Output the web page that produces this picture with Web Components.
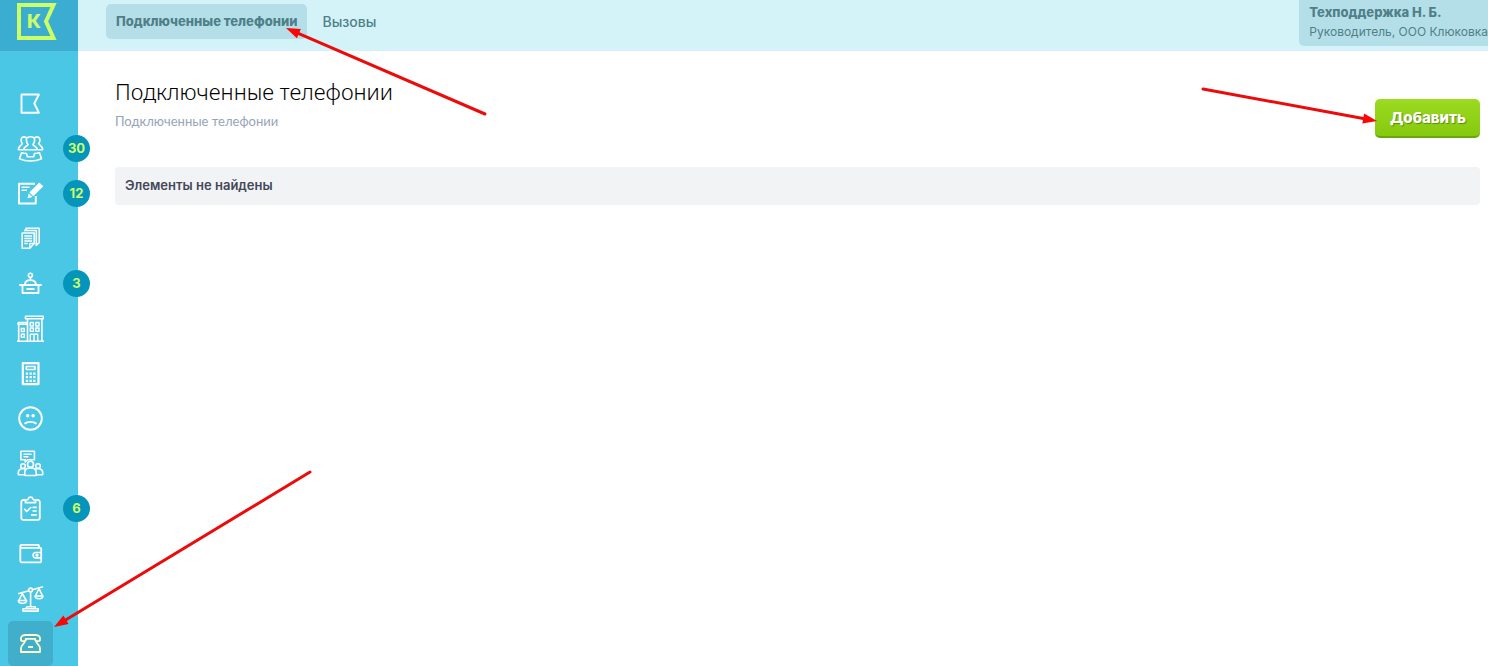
<!DOCTYPE html>
<html lang="ru">
<head>
<meta charset="utf-8">
<meta name="viewport" content="width=device-width, initial-scale=1">
<title>Подключенные телефонии</title>
<style>
  html, body { margin: 0; }
  body { background: #fff; font-family: Inter, "Noto Sans", sans-serif; color: #000; }
</style>
</head>
<body>
<crm-app>
  <side-bar slot="side">
    <side-item icon="flag" label="Главная"></side-item>
    <side-item icon="clients" label="Обращения" count="30"></side-item>
    <side-item icon="note" label="Заявки" count="12"></side-item>
    <side-item icon="docs" label="Документы"></side-item>
    <side-item icon="desk" label="Приёмная" count="3"></side-item>
    <side-item icon="building" label="Дома"></side-item>
    <side-item icon="calc" label="Начисления"></side-item>
    <side-item icon="sad" label="Должники"></side-item>
    <side-item icon="meeting" label="Собрания"></side-item>
    <side-item icon="tasks" label="Задачи" count="6"></side-item>
    <side-item icon="wallet" label="Платежи"></side-item>
    <side-item icon="scales" label="Суды"></side-item>
    <side-item icon="phone" label="Телефония" active></side-item>
  </side-bar>
  <top-bar slot="top">
    <nav-tab active>Подключенные телефонии</nav-tab>
    <nav-tab>Вызовы</nav-tab>
    <user-card slot="user">Техподдержка Н. Б.<span slot="role">Руководитель, ООО Клюковка</span></user-card>
  </top-bar>
  <page-head>Подключенные телефонии
    <span slot="sub">Подключенные телефонии</span>
    <green-button slot="action">Добавить</green-button>
  </page-head>
  <empty-note>Элементы не найдены</empty-note>
</crm-app>

<script>
const define = (name, html, setup) => {
  const template = document.createElement('template');
  template.innerHTML = html;
  customElements.define(name, class extends HTMLElement {
    connectedCallback() {
      if (this.shadowRoot) return;
      const root = this.attachShadow({ mode: 'open' });
      root.append(template.content.cloneNode(true));
      if (setup) setup(this, root);
    }
  });
};

const ICONS = {
  flag: '<path stroke-width="1.900" d="M4.500 4.500h17.400l-4.600 9 4.600 9.200H4.500z"/>',
  clients: '<path d="M9.800 7.200c-1-2.800-.6-5.400 3.700-5.400s4.700 2.600 3.700 5.400c-.3 1-.6 1.600-1.200 2.200 0 1.800 4 1.600 4.500 5.300h-14c.5-3.700 4.500-3.500 4.500-5.300-.6-.6-.9-1.200-1.200-2.200z"/><path d="M9.500 2.600C5.500.7 3.200 3.200 4.300 6.600c.2.800.6 1.300 1 1.800C5.300 10 1.800 10 1.300 14.700h5M17.500 2.600c4-1.900 6.300.6 5.200 4-.2.800-.6 1.300-1 1.800 0 1.600 3.500 1.600 4 6.300h-5"/><path d="M4.500 17.800c2 .4 3.500.6 5 .7l.8 3.300h6.400l.8-3.300c1.500-.1 3-.3 5-.7l2 6c-6.500 3-15.500 3-22 0z"/>',
  note: '<path stroke-width="1.900" d="M18 3.800H2v19.700h16.800V16"/><path d="M4.500 7.300h8M4.500 10.200h5.500"/><path fill="currentColor" stroke="none" d="M22.300 2.500l4 3.800-10 10-4-3.800zM11.700 13.400l3.700 3.600-4.900 1.300z"/>',
  docs: '<path d="M9 5.500V3.200h13.200v14.500l-2 1.800h-1.400M7 5.500h12.300V21M5.200 8h12v10.500L12.800 23.300H5.200z"/><path stroke-width="1.300" d="M12.800 23.300v-4.800h4.400M7.300 11h7.800M7.300 13.500h7.800M7.300 16h7.800M7.300 18.500h3.500"/>',
  desk: '<circle cx="13.400" cy="5.300" r="2"/><path stroke-width="1.800" d="M7.800 14.500c.3-2.600 2.200-4.300 5.600-4.300s5.300 1.700 5.600 4.300M2.300 15h22.400M5.500 15v8h16v-8M9.500 19h8M13.400 7.500v2.700"/>',
  building: '<path d="M1 7.500h9.300M1 7.500v1.800h9.300M1.700 9v17.200h23.200V4M8.500 1.200h17.800v2.500H8.500zM10.500 4v22.200M0 26.200h27"/><path stroke-width="1.400" d="M4.300 13.500h3v3h-3zM4.300 19.200h3v3h-3zM13.200 7.500h3.200V11h-3.200zM18.800 7.500H22V11h-3.200zM13.200 13h3.200v3.200h-3.200zM18.800 13H22v3.200h-3.200zM13.300 26V19.300h7.400V26M17 19.300V26"/>',
  calc: '<path stroke-width="2.200" d="M5.800 3.100h15.700v21H5.800z"/><path d="M9.300 6.500h8.700v3H9.300z"/><path stroke-width="2.200" stroke-dasharray="2.300 1.400" d="M8.800 13.600h10M8.800 17.200h10M8.800 20.800h10"/>',
  sad: '<circle cx="13.500" cy="13.500" r="11.300" stroke-width="1.900"/><circle cx="10.700" cy="10.700" r="1.700" fill="currentColor" stroke="none"/><circle cx="16.100" cy="10.700" r="1.700" fill="currentColor" stroke="none"/><path stroke-width="1.900" d="M7.500 18.700c2.800-2.400 9-2.400 12 0"/>',
  meeting: '<path d="M3.900 1.300h13.500v8.400h-7l-2.200 2.300V9.700H3.900z"/><path d="M6.500 4.200h8M6.500 6.800h5"/><circle cx="13.500" cy="14.300" r="3"/><circle cx="6" cy="16" r="2.300"/><circle cx="21" cy="16" r="2.300"/><path d="M7.800 25.500v-3.300c0-2.600 1.800-3.700 3.700-4.200h4c2 .5 3.700 1.600 3.700 4.200v3.300zM7.700 24.800H1.300v-2.300c0-2 1-3.200 3.200-3.800h3l1 .7M19.300 24.800h6.400v-2.300c0-2-1-3.200-3.200-3.800h-3l-1 .7"/>',
  tasks: '<path stroke-width="1.800" d="M8.500 5H6.300a2 2 0 0 0-2 2v15.800a2 2 0 0 0 2 2h14.500a2 2 0 0 0 2-2V7a2 2 0 0 0-2-2h-2.300M8.500 7.700V5.200c1.500 0 2.500-.5 2.800-1.500.5-2 4-2 4.500 0 .3 1 1.200 1.500 2.700 1.500v2.500z"/><path stroke-width="1.700" d="M7.200 13.800l2.500 2.700 4.500-4.500M15.500 12.300h4.300M15.500 16h4.300M14 19.800h5.800"/>',
  wallet: '<path stroke-width="1.800" d="M3.300 8V6.300c0-1 .5-1.500 1.500-1.500H21c.7 0 1 .4 1 1V8M3.300 7.800v13c0 1 .5 1.500 1.500 1.500h18.400c.7 0 1-.4 1-1V8.800c0-.6-.3-1-1-1H3.300"/><path d="M24.200 12.500h-5.400a2.700 2.700 0 0 0 0 5.400h5.400"/><circle cx="20" cy="15.200" r=".8"/>',
  scales: '<path d="M1 8.700l10.800-3M15.200 4.700L26 1.700M13.600 7.300v14.500M9.500 21.800h8.800v2M9.500 21.800v2M6 23.700h15.200v2.400H6z"/><circle cx="13.600" cy="5" r="1.900"/><path d="M5.300 8.500L1.800 15.500h7.400zM1.300 15.500c.3 3.800 8 3.800 8.400 0zM22 3.500L18.400 11h7.200zM18 11c.3 3.600 7.700 3.600 8 0z"/>',
  phone: '<path stroke-width="1.800" d="M8.700 10.500c-1.400.6-3.800.8-4.600.1-.8-3.400.6-5.600 4.400-5.600h10c3.800 0 5.200 2.200 4.400 5.600-.8.700-3.200.5-4.600-.1V8.800H8.700zM8.300 10.800c-1.500 4-4.300 4.200-4.300 7.500v3.700h19v-3.700c0-3.300-2.800-3.500-4.300-7.500"/><path stroke-width="1.800" d="M11 17h5"/>'
};

/* Page frame: full-height side column, header row and content */
define('crm-app', `
<style>
  :host { display: grid; grid-template-columns: 78px minmax(0, 1fr); min-height: 100vh; }
  .main { display: flex; flex-direction: column; min-width: 0; }
  main { padding: 24px 8px 24px 37px; }
</style>
<slot name="side"></slot>
<div class="main"><slot name="top"></slot><main><slot></slot></main></div>`);

define('side-bar', `
<style>
  :host { display: block; background: #4bc7e6; position: relative; z-index: 1; }
  .logo { display: flex; height: 51px; background: #3badd1; }
  .logo svg { margin-left: 16px; }
  nav { display: flex; flex-direction: column; padding: 30px 0 0 8px; }
</style>
<a class="logo" href="#" aria-label="К">
  <svg width="42" height="42" viewBox="0 0 42 42">
    <path d="M3 5h34.500l-7.500 16.500L37.500 38H3z" fill="none" stroke="#ccff66" stroke-width="4"/>
    <text x="11" y="28" font-size="19" font-weight="800" fill="#ccff66">К</text>
  </svg>
</a>
<nav aria-label="Разделы"><slot></slot></nav>`);

define('side-item', `
<style>
  :host { display: block; position: relative; }
  a { display: grid; place-items: center; width: 45px; height: 45px; border-radius: 5px; color: #fff; text-decoration: none; }
  :host([active]) a { background: #41aecb; color: #ffffcc; }
  svg { width: 27px; height: 27px; fill: none; stroke: currentColor; stroke-width: 1.6; stroke-linejoin: round; }
  b { position: absolute; top: 9px; left: 55px; width: 27px; height: 27px; border-radius: 50%; background: #0595bb; color: #ccff66; font-size: 13px; font-weight: 700; line-height: 27px; text-align: center; }
  b:empty { display: none; }
  red-arrow { left: 46px; bottom: 39px; }
</style>
<a href="#"><svg viewBox="0 0 27 27" aria-hidden="true"></svg><b></b></a>
<slot></slot>`, (el, root) => {
  root.querySelector('svg').innerHTML = ICONS[el.getAttribute('icon')];
  root.querySelector('a').setAttribute('aria-label', el.getAttribute('label'));
  root.querySelector('b').textContent = el.getAttribute('count') || '';
  if (el.hasAttribute('active')) {
    const arrow = document.createElement('red-arrow');
    arrow.setAttribute('line', '256 0 0 155');
    root.append(arrow);
  }
});

define('top-bar', `
<style>
  :host { display: flex; justify-content: space-between; align-items: flex-start; height: 51px; background: #d4f3f8; }
  nav { display: flex; gap: 6px; padding: 4px 0 0 28px; }
</style>
<nav aria-label="Телефония"><slot></slot></nav>
<slot name="user"></slot>`);

define('nav-tab', `
<style>
  :host { display: block; position: relative; }
  a { display: block; padding: 0 9px; border-radius: 5px; color: #4f7f88; font-size: 14px; font-weight: 500; line-height: 35px; text-decoration: none; white-space: nowrap; }
  :host([active]) a { padding: 0 10px; background: #b5dfe8; font-size: 13px; font-weight: 800; }
  red-arrow { left: 180px; top: 24px; }
</style>
<a href="#"><slot></slot></a>`, (el, root) => {
  if (el.hasAttribute('active')) {
    const arrow = document.createElement('red-arrow');
    arrow.setAttribute('line', '199 86 0 0');
    root.append(arrow);
  }
});

define('user-card', `
<style>
  :host { display: block; padding: 3px 0 4px 10px; height: 39px; border-radius: 0 0 0 5px; background: #b5dfe8; color: #4f7f88; white-space: nowrap; }
  strong { display: block; font-size: 13px; font-weight: 800; line-height: 19px; }
  ::slotted(span) { display: block; font-size: 12px; line-height: 20px; }
</style>
<strong><slot></slot></strong><slot name="role"></slot>`);

define('page-head', `
<style>
  :host { display: flex; justify-content: space-between; align-items: flex-start; height: 92px; }
  h1, p { margin: 0; }
  h1 { font-family: "Noto Sans", sans-serif; font-size: 22px; font-weight: 300; line-height: 32px; }
  p { padding-top: 4px; color: #98a4b7; font-family: Lato, "Noto Sans", sans-serif; font-size: 13px; line-height: 20px; }
  .action { padding-top: 24px; }
</style>
<div><h1><slot></slot></h1><p><slot name="sub"></slot></p></div>
<div class="action"><slot name="action"></slot></div>`);

define('green-button', `
<style>
  :host { display: block; position: relative; }
  button { display: block; height: 39px; padding: 0 14px 0 15px; border: 0; border-bottom: 2px solid #6ba60b; border-radius: 5px; background: linear-gradient(#9bdb21, #86c90d); color: #fff; font: 800 15px/37px Inter, sans-serif; text-shadow: 1px 1px 1px #5b8c0a; }
  red-arrow { right: 103px; bottom: 17px; }
</style>
<button type="button"><slot></slot></button>
<red-arrow line="0 0 174 32"></red-arrow>`);

define('empty-note', `
<style>
  :host { display: block; padding: 8px 10px 10px; border-radius: 4px; background: #f2f3f5; color: #434758; font-size: 13px; font-weight: 600; line-height: 20px; }
</style>
<slot></slot>`);

/* Pointer drawn over the page: line="tailX tailY tipX tipY" */
define('red-arrow', `
<style>
  :host { display: block; position: absolute; z-index: 2; pointer-events: none; }
  svg { display: block; overflow: visible; fill: #fb0505; stroke: none; }
</style>
<svg aria-hidden="true"><line stroke="#ec0b0b" stroke-width="3" stroke-linecap="round"/><polygon/></svg>`, (el, root) => {
  const [x1, y1, x2, y2] = el.getAttribute('line').split(' ').map(Number);
  const svg = root.querySelector('svg');
  svg.setAttribute('width', Math.abs(x2 - x1));
  svg.setAttribute('height', Math.abs(y2 - y1));
  const len = Math.hypot(x2 - x1, y2 - y1), ux = (x2 - x1) / len, uy = (y2 - y1) / len;
  const bx = x2 - ux * 14, by = y2 - uy * 14;
  const line = root.querySelector('line');
  Object.entries({ x1, y1, x2: bx, y2: by }).forEach(([k, v]) => line.setAttribute(k, v));
  root.querySelector('polygon').setAttribute('points',
    `${x2},${y2} ${bx - uy * 5},${by + ux * 5} ${bx + uy * 5},${by - ux * 5}`);
});
</script>
</body>
</html>
